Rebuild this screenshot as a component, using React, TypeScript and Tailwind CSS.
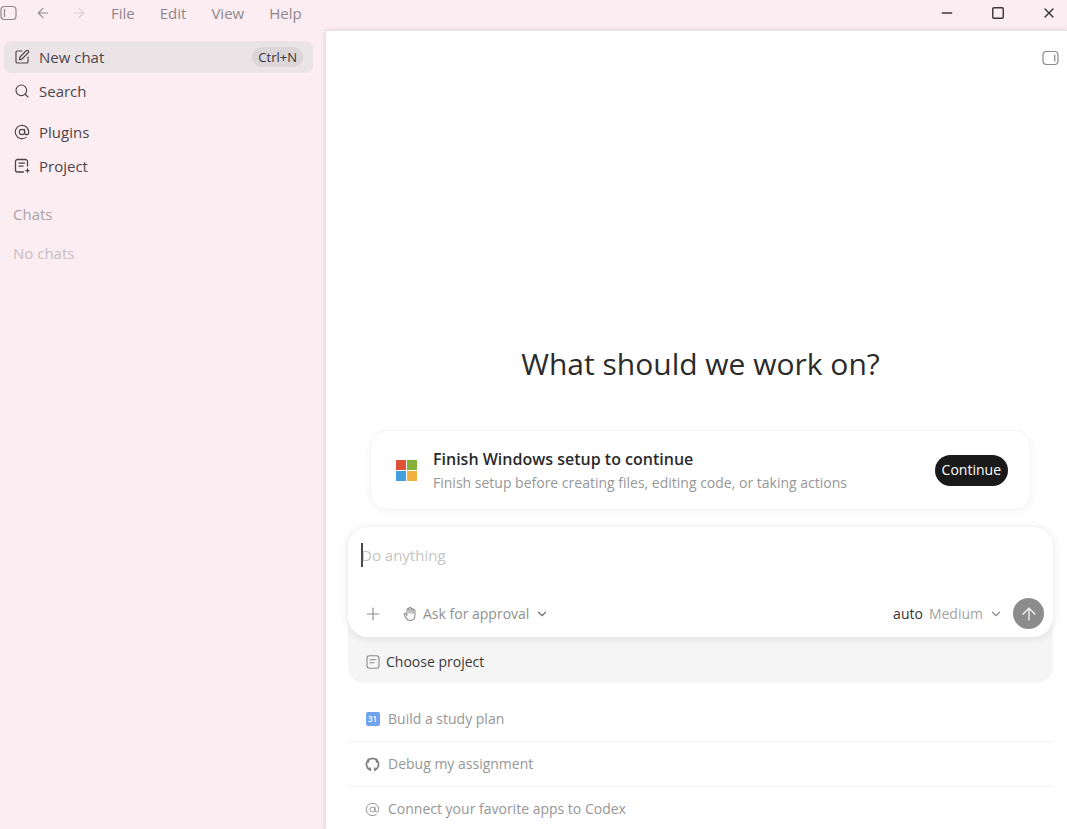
import React from "react";
import {
  ArrowLeft,
  ArrowRight,
  ArrowUp,
  AtSign,
  ChevronDown,
  Minus,
  Plus,
  Search,
  Square,
  SquarePen,
  X,
} from "lucide-react";

const menus = ["File", "Edit", "View", "Help"];

function PanelIcon({ side }: { side: "left" | "right" }) {
  return (
    <svg width="17" height="16" viewBox="0 0 17 16" fill="none" stroke="currentColor" strokeWidth="1.2" strokeLinecap="round">
      <rect x="1" y="1.5" width="15" height="13" rx="3.5" />
      <path d={side === "left" ? "M4.5 4.5v7" : "M12.8 5v6"} />
    </svg>
  );
}

function ProjectIcon() {
  return (
    <svg width="16" height="16" viewBox="0 0 16 16" fill="none" stroke="currentColor" strokeWidth="1.3" strokeLinecap="round" strokeLinejoin="round">
      <path d="M13.500 8V3.500a2 2 0 0 0-2-2H3.500a2 2 0 0 0-2 2v8.500a2 2 0 0 0 2 2H9.500" />
      <path d="M5 5.200h5.500M5 8.200h4" />
      <path d="M13.500 11v3.200M11.900 12.600h3.200" />
    </svg>
  );
}

function NoteIcon() {
  return (
    <svg width="14" height="14" viewBox="0 0 14 14" fill="none" stroke="currentColor" strokeWidth="1.1" strokeLinecap="round">
      <rect x="1" y="0.8" width="12" height="12.4" rx="2.5" />
      <path d="M4 4.800h6M4 7.800h4" />
    </svg>
  );
}

function HandIcon() {
  return (
    <svg width="14" height="16" viewBox="0 0 14 16" fill="none" stroke="currentColor" strokeWidth="1.1" strokeLinecap="round" strokeLinejoin="round">
      <path d="M4 8V3.600a1 1 0 0 1 2 0V2.300a1 1 0 0 1 2 0v1a1 1 0 0 1 2 0v1.200a1 1 0 0 1 2 0V9.500c0 3-2 5-4.800 5-2.200 0-3.600-1-4.500-2.900L1.300 8.800c-.5-1.100.9-1.900 1.600-.9L4 9.300" />
      <path d="M6 3.600v3.400M8 3.300v3.700M10 4.500v3" />
    </svg>
  );
}

function WindowsIcon() {
  return (
    <svg width="21" height="21" viewBox="0 0 21 21">
      <rect width="10" height="10" fill="#dd5137" />
      <rect x="11" width="10" height="10" fill="#86b037" />
      <rect y="11" width="10" height="10" fill="#429fdc" />
      <rect x="11" y="11" width="10" height="10" fill="#f0b13f" />
    </svg>
  );
}

function CalendarIcon() {
  return (
    <span className="flex size-[14px] items-center justify-center rounded-xs bg-[#6fa3ea] text-[8px] leading-none font-semibold text-white">
      31
    </span>
  );
}

function GithubIcon() {
  return (
    <svg width="15" height="15" viewBox="0 0 15 15" fill="none" stroke="#7d7d7d" strokeLinecap="round" strokeLinejoin="round">
      <path d="M5.200 12.900A6 6 0 1 1 9.800 12.900" strokeWidth="1.700" />
      <path d="M5.200 13.200v-2.200M9.800 13.200v-2.200M5.200 12.200c-1.100.3-1.700-.3-2.200-1" strokeWidth="1.300" />
      <path d="M3.300 2.500v2.300M11.700 2.500v2.300" strokeWidth="1.800" />
    </svg>
  );
}

const suggestions = [
  { label: "Build a study plan", icon: <CalendarIcon /> },
  { label: "Debug my assignment", icon: <GithubIcon /> },
  { label: "Connect your favorite apps to Codex", icon: <AtSign size={15} strokeWidth={1.6} /> },
];

function TitleBar() {
  return (
    <header className="flex h-[31px] shrink-0 items-center justify-between pb-[6px] text-[#8f878b]">
      <div className="flex items-center">
        <button aria-label="Toggle sidebar"><PanelIcon side="left" /></button>
        <button aria-label="Back" className="ml-[18px]"><ArrowLeft size={16} strokeWidth={1.6} /></button>
        <button aria-label="Forward" className="ml-5 text-[#dccfd4]"><ArrowRight size={16} strokeWidth={1.6} /></button>
        <nav className="ml-6 flex gap-[25px] text-[15px] leading-5">
          {menus.map((menu) => (
            <button key={menu}>{menu}</button>
          ))}
        </nav>
      </div>
      <div className="flex items-center gap-9 pr-[10px] text-[#3b3437]">
        <button aria-label="Minimize"><Minus size={16} strokeWidth={2} /></button>
        <button aria-label="Maximize"><Square size={14} strokeWidth={2.4} /></button>
        <button aria-label="Close"><X size={16} strokeWidth={2} /></button>
      </div>
    </header>
  );
}

function Sidebar() {
  return (
    <aside className="w-[326px] shrink-0 pt-[10px] text-[15px] leading-5 text-[#4b4548]">
      <nav>
        <button className="mx-1 flex h-[32px] w-[309px] items-center gap-[9px] rounded-lg bg-[#ebe4e7] px-[10px]">
          <SquarePen size={16} strokeWidth={1.7} />
          <span>New chat</span>
          <kbd className="ml-auto rounded-full bg-[#dcd6d9] px-[6px] text-[13px] leading-5 text-[#393437] [font-family:inherit]">Ctrl+N</kbd>
        </button>
        <button className="mt-px flex h-[34px] items-center gap-[9px] px-[14px]">
          <Search size={16} strokeWidth={1.7} />
          <span>Search</span>
        </button>
        <button className="mt-[7px] flex h-[34px] items-center gap-[9px] px-[14px]">
          <AtSign size={16} strokeWidth={1.7} />
          <span>Plugins</span>
        </button>
        <button className="flex h-[34px] items-center gap-[9px] px-[14px]">
          <ProjectIcon />
          <span>Project</span>
        </button>
      </nav>
      <h2 className="mt-[21px] px-[13px] text-[#aba2a6]">Chats</h2>
      <p className="mt-[19px] px-[13px] text-[#c8bcc1]">No chats</p>
    </aside>
  );
}

function SetupCard() {
  return (
    <section className="mx-[22px] mt-[46px] flex h-[80px] items-center rounded-2xl border border-[#f4f4f4] bg-white pr-[22px] pl-[25px] shadow-[0_2px_8px_rgba(0,0,0,0.04)]">
      <WindowsIcon />
      <div className="ml-4 pt-[2px]">
        <h2 className="text-[16px] leading-6 font-semibold text-[#2b2b2b]">Finish Windows setup to continue</h2>
        <p className="text-[14px] leading-6 text-[#979797]">Finish setup before creating files, editing code, or taking actions</p>
      </div>
      <button className="ml-auto h-[31px] rounded-full bg-[#1a1a1a] px-[7px] text-[14px] leading-5 text-white">Continue</button>
    </section>
  );
}

function Composer() {
  return (
    <form className="mt-[17px]" onSubmit={(e) => e.preventDefault()}>
      <div className="relative z-10 flex h-[110px] flex-col justify-between rounded-[20px] bg-white pt-[18px] pr-[9px] pb-2 pl-[13px] shadow-[0_1px_8px_rgba(0,0,0,0.11)]">
        <div className="relative">
          <textarea
            aria-label="Prompt"
            rows={1}
            placeholder="Do anything"
            className="block w-full resize-none text-[15px] leading-5 text-[#2b2b2b] outline-none placeholder:text-[#c4c4c4]"
          />
          <span className="absolute -top-[2px] left-0 h-6 w-[2px] bg-[#4a4a4a]" />
        </div>
        <div className="flex items-center text-[14px] leading-5 text-[#8f8f8f]">
          <button aria-label="Add" className="ml-[2px]"><Plus size={20} strokeWidth={1.4} /></button>
          <button className="ml-5 flex items-center gap-[6px]">
            <HandIcon />
            Ask for approval
            <ChevronDown size={14} strokeWidth={2} className="text-[#6f6f6f]" />
          </button>
          <button className="ml-auto flex items-center gap-[6px]">
            <span className="text-[#333333]">auto</span>
            <span className="text-[#a3a3a3]">Medium</span>
            <ChevronDown size={14} strokeWidth={2} />
          </button>
          <button aria-label="Send" className="ml-[10px] flex size-[31px] items-center justify-center rounded-full bg-[#8c8c8c] text-white">
            <ArrowUp size={20} strokeWidth={1.5} />
          </button>
        </div>
      </div>
      <button className="-mt-4 flex h-[62px] w-full items-center gap-[6px] rounded-b-2xl bg-[#f5f5f5] px-[18px] pt-[19px] text-[14px] leading-5 text-[#3a3a3a]">
        <span className="text-[#8a8a8a]"><NoteIcon /></span>
        Choose project
      </button>
    </form>
  );
}

export default function App() {
  return (
    <div className="flex h-screen flex-col overflow-hidden bg-[#fbedf1] font-['Open_Sans',sans-serif]">
      <TitleBar />
      <div className="flex min-h-0 flex-1">
        <Sidebar />
        <main className="min-w-0 flex-1 bg-white shadow-[0_0_5px_rgba(90,50,65,0.22)]">
          <div className="flex h-[54px] items-center justify-end pr-2 text-[#8a8a8a]">
            <button aria-label="Toggle side panel"><PanelIcon side="right" /></button>
          </div>
          <div className="pr-[14px] pl-[22px]">
            <h1 className="pt-[259px] text-center text-[30px] leading-10 text-[#2b2b2b]">What should we work on?</h1>
            <SetupCard />
            <Composer />
            <ul className="mt-[14px] divide-y divide-[#f5f5f5] text-[14px] leading-5 text-[#969696]">
              {suggestions.map((item) => (
                <li key={item.label}>
                  <button className="flex h-11 w-full items-center gap-2 px-[17px]">
                    <span className="flex w-[15px] justify-center">{item.icon}</span>
                    {item.label}
                  </button>
                </li>
              ))}
            </ul>
          </div>
        </main>
      </div>
    </div>
  );
}
